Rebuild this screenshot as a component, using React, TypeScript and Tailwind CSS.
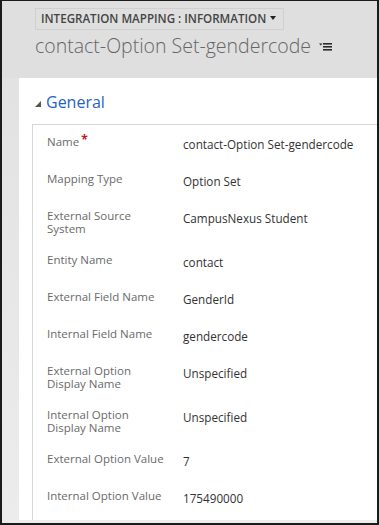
import React from 'react';

interface Field {
  label: string;
  value: string;
  required?: boolean;
}

const fields: Field[] = [
  { label: 'Name', value: 'contact-Option Set-gendercode', required: true },
  { label: 'Mapping Type', value: 'Option Set' },
  { label: 'External Source System', value: 'CampusNexus Student' },
  { label: 'Entity Name', value: 'contact' },
  { label: 'External Field Name', value: 'GenderId' },
  { label: 'Internal Field Name', value: 'gendercode' },
  { label: 'External Option Display Name', value: 'Unspecified' },
  { label: 'Internal Option Display Name', value: 'Unspecified' },
  { label: 'External Option Value', value: '7' },
  { label: 'Internal Option Value', value: '175490000' },
];

const MenuIcon = () => (
  <svg width="13" height="8" viewBox="0 0 13 8" className="ml-[8px] mt-[2px]">
    <path d="M0 0.5 L3.5 0.5 L1.75 2.5 Z" fill="#2b2b2b" />
    <rect x="4" y="0" width="9" height="1.6" fill="#2b2b2b" />
    <rect x="4" y="3" width="9" height="1.6" fill="#2b2b2b" />
    <rect x="4" y="6" width="9" height="1.6" fill="#2b2b2b" />
  </svg>
);

export default function App() {
  return (
    <div
      className="w-[379px] h-[525px] overflow-hidden flex flex-col bg-[#dfdfdf] border-l-2 border-r-2 border-t border-b-2 border-[#1b1b1b]"
      style={{ fontFamily: '"Open Sans", "Noto Sans", sans-serif' }}
    >
      {/* header */}
      <div className="h-[77px] shrink-0 pl-[33px] pt-[4px]">
        <div className="inline-flex items-center h-[22px] border border-[#d0d0d0] pl-[5px] pr-[7px]">
          <span className="text-[11.6px] font-semibold text-[#444] uppercase leading-none">
            Integration Mapping : Information
          </span>
          <svg width="6" height="4" viewBox="0 0 6 4" className="ml-[4px] mb-[2px]">
            <path d="M0 0 L6 0 L3 4 Z" fill="#222" />
          </svg>
        </div>
        <div className="flex items-center mt-[2px]">
          <span className="text-[19.5px] font-light text-[#666] leading-[28px]">contact-Option Set-gendercode</span>
          <MenuIcon />
        </div>
      </div>

      {/* body */}
      <div className="flex flex-1 bg-linear-to-b from-[#e2e2e2] to-[#ececec]">
        <div className="w-[17px] shrink-0" />
        <div className="flex-1 bg-white flex flex-col mb-[3px]">
          <div className="h-[46px] shrink-0 flex items-center pl-[16px] pt-[2px]">
            <svg width="6" height="6" viewBox="0 0 6 6" className="mt-[3px]">
              <path d="M6 0 L6 6 L0 6 Z" fill="#555" />
            </svg>
            <span className="ml-[5px] text-[16px] text-[#1f63c1] leading-[20px]">General</span>
          </div>
          <div className="flex-1 ml-[13px] border-l border-t border-[#d6d6d6] pt-[1px] pl-[14px]">
            {fields.map(f => (
              <div key={f.label} className="flex items-start py-[9px]">
                <div className="w-[136px] shrink-0 mt-[1px]">
                  <div className="w-[120px] text-[11.5px] leading-[12.5px] text-[#6a6a6a]">
                    {f.label}
                    {f.required && <span className="text-[#c4161c] text-[12px] font-bold align-top ml-[2px] leading-[8px]">*</span>}
                  </div>
                </div>
                <div className="text-[11.7px] leading-[19px] text-[#333]">{f.value}</div>
              </div>
            ))}
          </div>
        </div>
      </div>
    </div>
  );
}
